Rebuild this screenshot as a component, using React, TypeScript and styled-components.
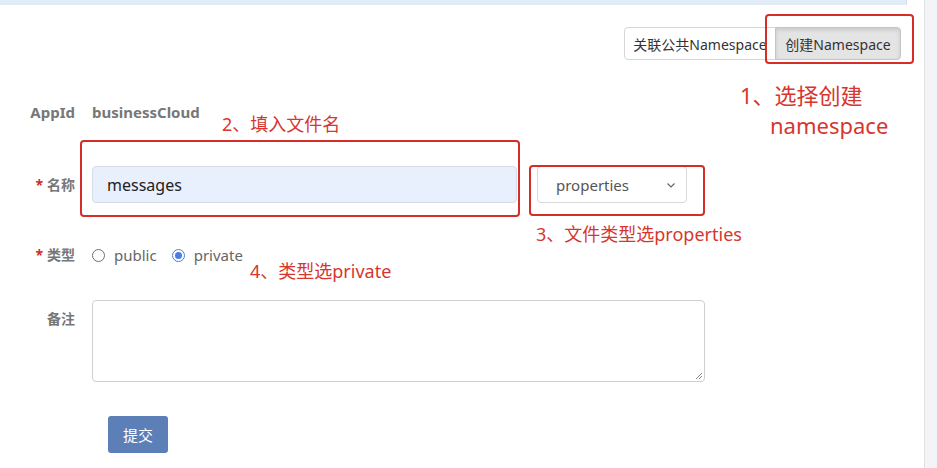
import React from "react";
import styled, { createGlobalStyle } from "styled-components";

const Global = createGlobalStyle`
  html, body { margin: 0; padding: 0; background: #ffffff; }
  body { font-family: "Noto Sans", "Noto Sans CJK SC", sans-serif; }
  * { box-sizing: border-box; }
`;

const Page = styled.div`
  display: flex;
  width: 937px;
  height: 468px;
  overflow: hidden;
`;

const Main = styled.div`
  position: relative;
  width: 924px;
  flex: none;
`;

const ScrollStrip = styled.div`
  flex: 1;
  background: #f3f4f6;
  border-left: 1px solid #e1e2e6;
`;

const TopBar = styled.div`
  height: 5px;
  width: 907px;
  background: #e2ecf7;
  border-right: 1px solid #d4dfec;
`;

const Toolbar = styled.div`
  display: flex;
  justify-content: flex-end;
  margin-top: 22px;
  padding-right: 23px;
`;

const GroupButton = styled.div<{ $active?: boolean; $first?: boolean; $w: number }>`
  width: ${(p) => p.$w}px;
  height: 33px;
  display: flex;
  align-items: center;
  justify-content: center;
  font-size: 14px;
  color: #333;
  white-space: nowrap;
  overflow: hidden;
  background: ${(p) => (p.$active ? "#e4e4e4" : "#ffffff")};
  border: 1px solid ${(p) => (p.$active ? "#c4c4c4" : "#d6d6d6")};
  border-radius: ${(p) => (p.$first ? "4px 0 0 4px" : "0 4px 4px 0")};
  margin-left: ${(p) => (p.$first ? "0" : "-1px")};
  box-shadow: ${(p) => (p.$active ? "inset 0 2px 4px rgba(0,0,0,0.12)" : "none")};
`;

const Row = styled.div<{ $mt: number; $align?: string }>`
  display: flex;
  align-items: ${(p) => p.$align || "center"};
  margin-top: ${(p) => p.$mt}px;
`;

const Label = styled.div<{ $pt?: number }>`
  width: 75px;
  flex: none;
  text-align: right;
  font-size: 14px;
  font-weight: bold;
  color: #777;
  line-height: 20px;
  padding-top: ${(p) => p.$pt || 0}px;
  margin-right: 17px;
  white-space: nowrap;
`;

const AppLabel = styled(Label)`
  font-size: 15px;
`;

const Star = styled.span`
  color: #c9302c;
  margin-right: 4px;
`;

const StaticValue = styled.div`
  font-size: 15px;
  font-weight: bold;
  color: #777;
  line-height: 20px;
`;

const TextInput = styled.div`
  width: 425px;
  height: 37px;
  display: flex;
  align-items: center;
  padding-left: 14px;
  background: #e8f0fe;
  border: 1px solid #d6dce6;
  border-radius: 4px;
  font-size: 16px;
  color: #222;
`;

const Select = styled.div`
  width: 150px;
  height: 37px;
  margin-left: 20px;
  display: flex;
  align-items: center;
  justify-content: space-between;
  padding: 0 9px 0 18px;
  background: #fff;
  border: 1px solid #d9d9d9;
  border-radius: 4px;
  font-size: 15px;
  color: #555;
`;

const RadioGroup = styled.div`
  display: flex;
  align-items: center;
  font-size: 15px;
  color: #666;
  line-height: 20px;
`;

const RadioItem = styled.div`
  display: flex;
  align-items: center;
  margin-right: 15px;
`;

const RadioCircle = styled.span<{ $checked?: boolean }>`
  width: 13px;
  height: 13px;
  border-radius: 50%;
  border: 1px solid ${(p) => (p.$checked ? "#4a7ee0" : "#6f6f6f")};
  display: flex;
  align-items: center;
  justify-content: center;
  margin-right: 9px;
  &::after {
    content: "";
    width: 7px;
    height: 7px;
    border-radius: 50%;
    background: ${(p) => (p.$checked ? "#4a7ee0" : "transparent")};
  }
`;

const TextArea = styled.div`
  position: relative;
  width: 613px;
  height: 82px;
  border: 1px solid #cfcfcf;
  border-radius: 4px;
  background: #fff;
`;

const ResizeGrip = styled.svg`
  position: absolute;
  right: 1px;
  bottom: 1px;
`;

const SubmitButton = styled.div`
  margin-left: 108px;
  width: 60px;
  height: 37px;
  display: flex;
  align-items: center;
  justify-content: center;
  background: #5b7fb6;
  color: #fff;
  font-size: 15px;
  border-radius: 3px;
`;

const RedBox = styled.div<{ $x: number; $y: number; $w: number; $h: number }>`
  position: absolute;
  left: ${(p) => p.$x}px;
  top: ${(p) => p.$y}px;
  width: ${(p) => p.$w}px;
  height: ${(p) => p.$h}px;
  border: 2px solid #d52d27;
  border-radius: 4px;
  pointer-events: none;
`;

const Note = styled.div<{ $x: number; $y: number; $size: number; $lh: number }>`
  position: absolute;
  left: ${(p) => p.$x}px;
  top: ${(p) => p.$y}px;
  font-size: ${(p) => p.$size}px;
  line-height: ${(p) => p.$lh}px;
  color: #d6362e;
  white-space: nowrap;
`;

const NoteIndent = styled.div`
  padding-left: 30px;
`;

export default function App() {
  return (
    <Page>
      <Global />
      <Main>
        <TopBar />
        <Toolbar>
          <GroupButton $first $w={152}>关联公共Namespace</GroupButton>
          <GroupButton $active $w={126}>创建Namespace</GroupButton>
        </Toolbar>

        <Row $mt={42}>
          <AppLabel>AppId</AppLabel>
          <StaticValue>businessCloud</StaticValue>
        </Row>

        <Row $mt={44}>
          <Label>
            <Star>*</Star>名称
          </Label>
          <TextInput>messages</TextInput>
          <Select>
            properties
            <svg width="12" height="12" viewBox="0 0 12 12">
              <path d="M2.5 4.5 L6 8 L9.5 4.5" fill="none" stroke="#666" strokeWidth="1.2" />
            </svg>
          </Select>
        </Row>

        <Row $mt={42}>
          <Label>
            <Star>*</Star>类型
          </Label>
          <RadioGroup>
            <RadioItem>
              <RadioCircle />
              public
            </RadioItem>
            <RadioItem>
              <RadioCircle $checked />
              private
            </RadioItem>
          </RadioGroup>
        </Row>

        <Row $mt={35} $align="flex-start">
          <Label $pt={9}>备注</Label>
          <TextArea>
            <ResizeGrip width="10" height="10" viewBox="0 0 10 10">
              <path d="M9 3 L3 9 M9 6 L6 9" stroke="#888" strokeWidth="1" />
            </ResizeGrip>
          </TextArea>
        </Row>

        <Row $mt={34}>
          <SubmitButton>提交</SubmitButton>
        </Row>

        <RedBox $x={765} $y={14} $w={149} $h={50} />
        <RedBox $x={80} $y={140} $w={440} $h={77} />
        <RedBox $x={529} $y={165} $w={176} $h={51} />

        <Note $x={740} $y={80} $size={22} $lh={30}>
          1、选择创建
          <NoteIndent>namespace</NoteIndent>
        </Note>
        <Note $x={222} $y={112} $size={18} $lh={24}>2、填入文件名</Note>
        <Note $x={536} $y={222} $size={18} $lh={24}>3、文件类型选properties</Note>
        <Note $x={250} $y={259} $size={18} $lh={24}>4、类型选private</Note>
      </Main>
      <ScrollStrip />
    </Page>
  );
}
